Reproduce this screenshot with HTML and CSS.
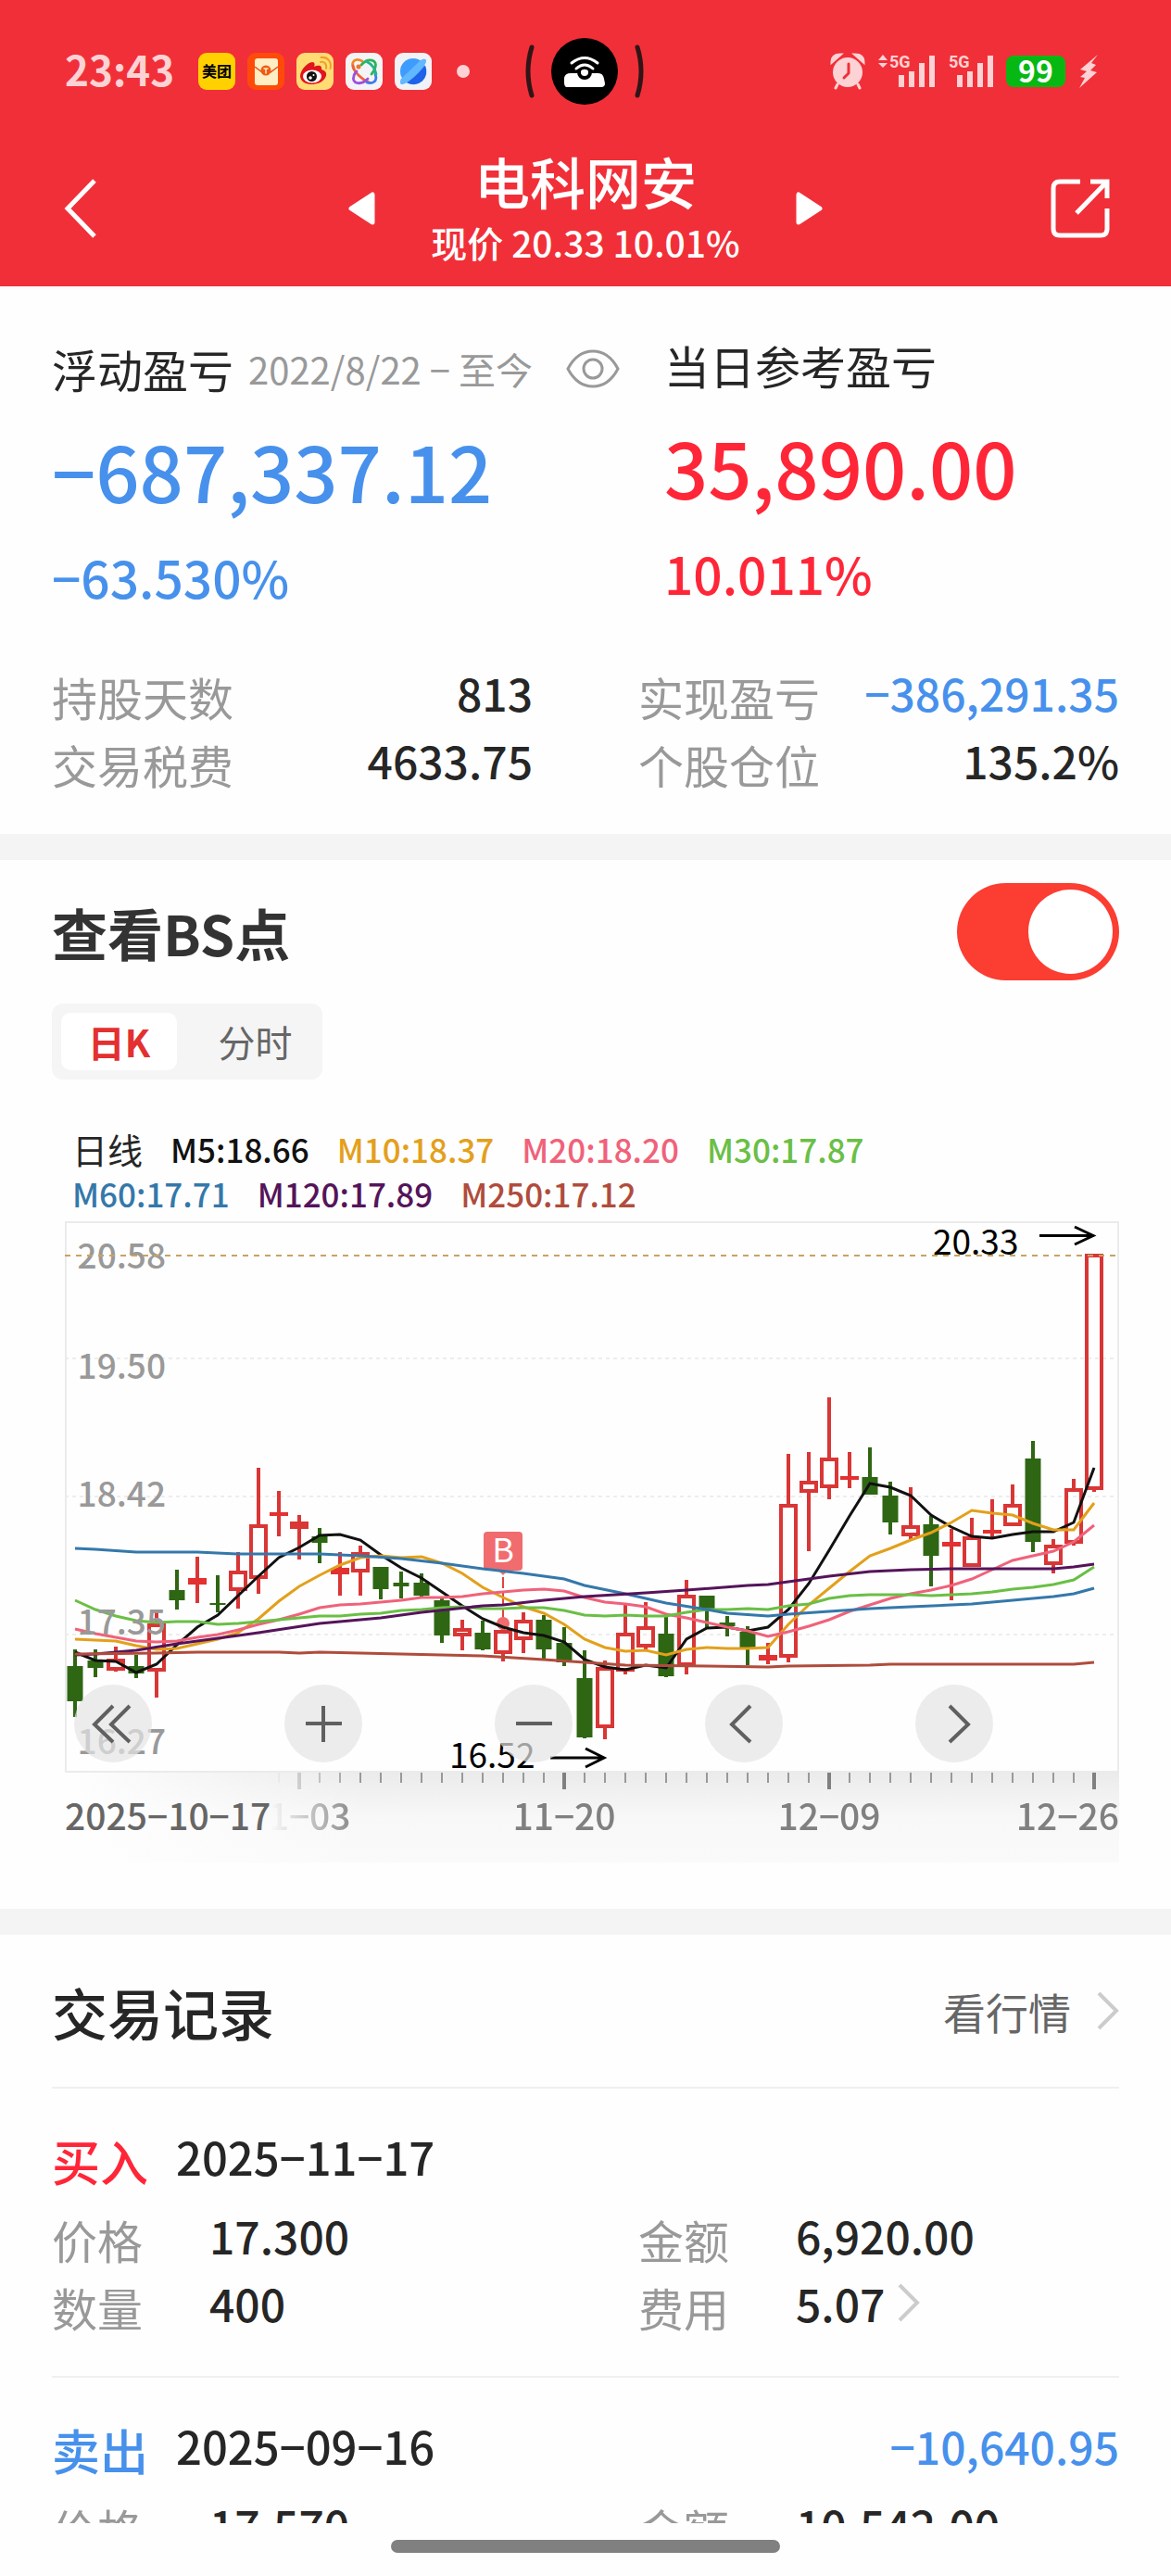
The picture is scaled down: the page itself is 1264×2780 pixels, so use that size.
FILE: index.html
```html
<!DOCTYPE html>
<html lang="zh-CN">
<head>
  <meta charset="UTF-8">
  <meta name="viewport" content="width=device-width, initial-scale=1.0">
  <title>电科网安</title>
  <link rel="stylesheet" href="styles.css">
</head>
<body>
  <header>
    <div class="status-bar">
      <div class="status-left">
        <span class="time">23:43</span>
        <div class="apps">
          <svg viewBox="0 0 40 40"><rect width="40" height="40" rx="9" fill="#ffd100"/><text x="20" y="26" class="meituan">美团</text></svg>
          <svg viewBox="0 0 40 40">
            <rect width="40" height="40" rx="9" fill="#ff4b0a"/>
            <rect x="8" y="6" width="25" height="29" rx="3" fill="#ffedc4"/>
            <path d="M8 15l8 6h9l8-6" fill="none" stroke="#e8500e" stroke-width="1.5"/>
            <circle cx="20" cy="19" r="5.5" fill="#f05a12"/>
            <path d="M17.500 17h5M20 17v5.500" stroke="#ffedc4" stroke-width="1.500"/>
          </svg>
          <svg viewBox="0 0 40 40">
            <rect width="40" height="40" rx="9" fill="#ffdc74"/>
            <path d="M4 25c0-6 8-15 13-15 3 0 3 3 2 5 4-2 9-2 8 3 4 1 7 4 4 9-3 5-9 7-15 7-7 0-12-4-12-9z" fill="#e2141c"/>
            <ellipse cx="17" cy="25.500" rx="10" ry="7" fill="#fff"/>
            <circle cx="16.500" cy="25.500" r="5.500" fill="#111"/>
            <circle cx="15" cy="27" r="1.800" fill="#fff"/><circle cx="18.500" cy="24" r="1" fill="#fff"/>
            <path d="M26 10c4-1 7 2 6 7M26.500 5c7-1 12 5 10 12" fill="none" stroke="#f0a02c" stroke-width="2" stroke-linecap="round"/>
          </svg>
          <svg viewBox="0 0 40 40">
            <rect width="40" height="40" rx="9" fill="#f4f4f6"/>
            <g fill="none" stroke-width="2.800" stroke-linecap="round">
              <path d="M9 17C5 9 11 5 18 9" stroke="#f08a24"/>
              <path d="M17 13c8-9 18-5 15 3-1 3-2 5-4 7" stroke="#2fb457"/>
              <path d="M8 14c0 6 11 16 18 18" stroke="#f0623c"/>
              <path d="M32 23c3 8-3 11-9 9" stroke="#3b7df0"/>
              <path d="M22 9c6 3 10 8 11 14" stroke="#27b48a"/>
              <path d="M24 28c-8 8-18 5-15-3 0-2 2-4 3-5" stroke="#9b50e0"/>
            </g>
            <circle cx="14" cy="15" r="2.500" fill="#f0742c"/>
          </svg>
          <svg viewBox="0 0 40 40">
            <rect width="40" height="40" rx="9" fill="#f1f2f5"/>
            <circle cx="20" cy="20" r="14" fill="#3f9cff"/>
            <path d="M33 14a14 14 0 0 1-20 18z" fill="#1e62ea"/>
            <path d="M6 32c0 4 6 2 14-5S35 11 34 8c-1-2-4-1-6 0L7 28c-1 1-1 3-1 4z" fill="#62b8ff"/>
          </svg>
        </div>
        <span class="more-dot"></span>
      </div>

      <svg class="island" viewBox="0 0 132 74">
        <path d="M9 11q-8 26 0 52M123 11q8 26 0 52" fill="none" stroke="#301518" stroke-width="5" stroke-linecap="round"/>
        <circle cx="66" cy="37" r="36" fill="#000"/>
        <path d="M44 49v-5q1-5 7-5h30q5 0 6 6l1 5q0 4-4 4H47q-3 0-3-5z" fill="#fff"/>
        <circle cx="66" cy="38" r="6" fill="#fff" stroke="#000" stroke-width="4"/>
        <path d="M57 35q9-9 18 0" fill="none" stroke="#000" stroke-width="8"/>
        <path d="M57 34q9-8 18 0M52 28q14-11 28 0" fill="none" stroke="#fff" stroke-width="3" stroke-linecap="round"/>
      </svg>

      <div class="status-right">
        <svg width="38" height="40" viewBox="0 0 38 40">
          <circle cx="19" cy="21" r="16" fill="#fdd2d4"/>
          <path d="M2 10q0-8 9-8zM36 10q0-8-9-8zM8 34l-2 4M30 34l2 4" fill="#fdd2d4" stroke="#fdd2d4" stroke-width="3" stroke-linecap="round"/>
          <path d="M20 12v10l-5 5" fill="none" stroke="#f12f38" stroke-width="3" stroke-linecap="round"/>
        </svg>
        <svg width="62" height="40" viewBox="0 0 62 40">
          <path d="M0 8l5-6 5 6zM0 11l5 5 5-5z" fill="#fdd2d4"/>
          <text x="12" y="16" class="net">5G</text>
          <path d="M25 24v13M36 20v17M47 11v26M58 3v34" stroke="#fdd2d4" stroke-width="6"/>
        </svg>
        <svg width="48" height="40" viewBox="0 0 48 40">
          <text x="0" y="16" class="net">5G</text>
          <path d="M12 24v13M23 20v17M34 11v26M45 3v34" stroke="#fdd2d4" stroke-width="6"/>
        </svg>
        <span class="battery">99</span>
        <svg width="22" height="38" viewBox="0 0 22 38"><path d="M21 1L2 17l7 2-7 6 5 1-6 11 19-17-7-2 6-6-5-2z" fill="#fdd2d4"/></svg>
      </div>
    </div>

    <nav>
      <button type="button" class="icon-btn" aria-label="返回">
        <svg width="64" height="64" viewBox="0 0 64 64"><path d="M36 2L7 32l29 30" fill="none" stroke="#fff" stroke-width="5"/></svg>
      </button>
      <div class="stock">
        <button type="button" class="icon-btn" aria-label="上一只">
          <svg width="30" height="36" viewBox="0 0 30 36"><path d="M26 3v30L3 18z" fill="#fff" stroke="#fff" stroke-width="5" stroke-linejoin="round"/></svg>
        </button>
        <div class="stock-name">
          <h1>电科网安</h1>
          <p>现价 20.33 10.01%</p>
        </div>
        <button type="button" class="icon-btn" aria-label="下一只">
          <svg width="30" height="36" viewBox="0 0 30 36"><path d="M4 3v30l23-15z" fill="#fff" stroke="#fff" stroke-width="5" stroke-linejoin="round"/></svg>
        </button>
      </div>
      <button type="button" class="icon-btn" aria-label="分享">
        <svg width="64" height="64" viewBox="0 0 64 64"><path d="M32 3H10q-7 0-7 7v44q0 7 7 7h44q7 0 7-7V32M43 3h18v18M61 3L28 37" fill="none" stroke="#fff" stroke-width="5"/></svg>
      </button>
    </nav>
  </header>

  <main>
    <section class="summary">
      <div class="pnl">
        <div class="pnl-total">
          <div class="pnl-label">
            <h2>浮动盈亏</h2>
            <span class="range">2022/8/22 − 至今</span>
            <button type="button" class="icon-btn eye" aria-label="隐藏金额">
              <svg width="58" height="42" viewBox="0 0 58 42" fill="none" stroke="#999" stroke-width="3"><path d="M2 21Q12 2 29 2t27 19Q46 40 29 40T2 21z"/><circle cx="29" cy="21" r="10"/></svg>
            </button>
          </div>
          <p class="amount blue">−687,337.12</p>
          <p class="rate blue">−63.530%</p>
        </div>
        <div class="pnl-day">
          <div class="pnl-label"><h2>当日参考盈亏</h2></div>
          <p class="amount red">35,890.00</p>
          <p class="rate red">10.011%</p>
        </div>
      </div>
      <dl class="rows stats">
        <div class="row"><dt>持股天数</dt><dd>813</dd></div>
        <div class="row"><dt>实现盈亏</dt><dd class="blue">−386,291.35</dd></div>
        <div class="row"><dt>交易税费</dt><dd>4633.75</dd></div>
        <div class="row"><dt>个股仓位</dt><dd>135.2%</dd></div>
      </dl>
    </section>

    <section class="bs">
      <div class="bs-head">
        <h2><label for="bs-switch">查看BS点</label></h2>
        <input type="checkbox" id="bs-switch" class="switch" checked>
      </div>
      <div class="tabs">
        <button type="button" class="tab active">日K</button>
        <button type="button" class="tab">分时</button>
      </div>
      <div class="chart-box">
        <div class="legend">
          <span class="legend-title">日线</span>
          <span class="m5">M5:18.66</span>
          <span class="m10">M10:18.37</span>
          <span class="m20">M20:18.20</span>
          <span class="m30">M30:17.87</span>
          <span class="m60">M60:17.71</span>
          <span class="m120">M120:17.89</span>
          <span class="m250">M250:17.12</span>
        </div>
        <div class="chart">
          <svg class="kline" viewBox="0 0 1138 692">
            <defs>
              <linearGradient id="axisBg" x2="0" y2="1"><stop offset="0" stop-color="#ebebeb"/><stop offset=".5" stop-color="#f8f8f8"/><stop offset="1" stop-color="#fafafa"/></linearGradient>
              <linearGradient id="axisFade"><stop offset="0" stop-color="#fefefe"/><stop offset="1" stop-color="#fefefe" stop-opacity="0"/></linearGradient>
              <linearGradient id="labelFade" gradientUnits="userSpaceOnUse" x1="222" x2="320" y1="0" y2="0"><stop offset="0" stop-color="#000"/><stop offset="1" stop-color="#fff"/></linearGradient>
              <mask id="labelMask" maskUnits="userSpaceOnUse" x="0" y="590" width="1138" height="102"><rect y="590" width="1138" height="102" fill="url(#labelFade)"/></mask>
            </defs>
            <path class="grid" d="M0 148H1138M0 297H1138M0 446H1138"/>
            <rect class="frame" x="1" y="1" width="1136" height="593"/>
            <g id="candles"></g>
            <g class="bs-mark">
              <path class="bs-line" d="M473 384V430"/>
              <circle cx="473" cy="434" r="7"/>
              <path d="M467 376h12l-6 6z"/>
              <rect x="452" y="335" width="42" height="42" rx="4"/>
              <text x="473" y="368">B</text>
            </g>
            <g id="lines"></g>
            <g class="y-labels">
              <text x="109" y="51">20.58</text>
              <text x="109" y="170">19.50</text>
              <text x="109" y="308">18.42</text>
              <text x="109" y="446">17.35</text>
              <text x="109" y="575">16.27</text>
            </g>
            <path class="last-price" d="M0 37H1138"/>
            <g class="marks">
              <text x="937" y="36">20.33</text>
              <path d="M1052 15.500h58M1090 6l20 9.500-20 9.500"/>
              <text x="415" y="590">16.52</text>
              <path d="M524 579h58M562 569l20 10-20 10"/>
            </g>
            <rect y="595" width="1138" height="97" fill="url(#axisBg)"/>
            <rect y="595" width="330" height="97" fill="url(#axisFade)"/>
            <g mask="url(#labelMask)">
              <g id="ticks"></g>
              <g class="x-labels">
                <text x="253" y="657">11−03</text>
                <text x="539" y="657">11−20</text>
                <text x="825" y="657">12−09</text>
                <text x="1138" y="657" class="end">12−26</text>
              </g>
            </g>
            <text class="x-start" x="0" y="657">2025−10−17</text>
          </svg>
          <div class="chart-tools">
            <button type="button" aria-label="最早"><svg viewBox="0 0 84 84"><path d="M42 23L22 43l20 19M60 23L40 43l20 19"/></svg></button>
            <button type="button" aria-label="放大"><svg viewBox="0 0 84 84"><path d="M42 23v39M23 42h39"/></svg></button>
            <button type="button" aria-label="缩小"><svg viewBox="0 0 84 84"><path d="M23 42h39"/></svg></button>
            <button type="button" aria-label="向左"><svg viewBox="0 0 84 84"><path d="M49 23L29 43l20 19"/></svg></button>
            <button type="button" aria-label="向右"><svg viewBox="0 0 84 84"><path d="M37 23l20 20-20 19"/></svg></button>
          </div>
        </div>
      </div>
    </section>

    <section class="trades">
      <div class="trades-head">
        <h2>交易记录</h2>
        <a href="#">看行情<svg width="24" height="42" viewBox="0 0 24 42"><path d="M2 2l19 19L2 40"/></svg></a>
      </div>
      <article class="trade">
        <div class="trade-title"><h3 class="red">买入</h3><span class="date">2025−11−17</span></div>
        <dl class="rows">
          <div class="row"><dt>价格</dt><dd>17.300</dd></div>
          <div class="row"><dt>金额</dt><dd>6,920.00</dd></div>
          <div class="row"><dt>数量</dt><dd>400</dd></div>
          <div class="row"><dt>费用</dt><dd>5.07<svg width="24" height="42" viewBox="0 0 24 42"><path d="M2 2l19 19L2 40"/></svg></dd></div>
        </dl>
      </article>
      <article class="trade">
        <div class="trade-title"><h3 class="blue">卖出</h3><span class="date">2025−09−16</span><span class="profit blue">−10,640.95</span></div>
        <dl class="rows">
          <div class="row"><dt>价格</dt><dd>17.570</dd></div>
          <div class="row"><dt>金额</dt><dd>10,542.00</dd></div>
        </dl>
      </article>
    </section>
  </main>

  <footer><div class="home-bar"></div></footer>

  <script>
    const step = 22;
    const first = 11;

    // [最高, 实体上沿, 实体下沿, 最低, 类型] r: 空心阳线 s: 实心阳线 g: 阴线
    const candles = [
      [462,480,518,535,'g'],[462,474,482,492,'g'],[459,472,485,486,'r'],[468,480,488,493,'g'],[422,434,486,514,'r'],
      [376,398,409,419,'g'],[362,385,392,412,'s'],[382,412,414,422,'g'],[357,377,399,418,'r'],[266,327,386,402,'r'],
      [291,314,318,340,'s'],[317,324,332,365,'r'],[331,340,347,369,'g'],[357,374,381,404,'s'],[350,357,379,404,'r'],
      [373,373,397,408,'g'],[378,390,394,407,'g'],[380,390,404,405,'g'],[407,409,447,455,'g'],[430,439,448,463,'r'],
      [431,444,462,463,'g'],[440,441,467,475,'r'],[422,430,452,466,'r'],[425,430,462,474,'g'],[438,455,476,480,'g'],
      [463,493,557,558,'g'],[474,481,547,559,'r'],[414,444,486,489,'r'],[411,437,460,464,'r'],[427,445,491,492,'g'],
      [387,403,480,489,'r'],[404,404,420,439,'g'],[426,433,437,448,'g'],[437,443,462,479,'g'],[455,468,474,478,'s'],
      [251,305,471,476,'r'],[249,280,293,356,'r'],[190,255,288,300,'r'],[249,275,279,288,'s'],[244,276,295,295,'g'],
      [281,296,325,338,'g'],[287,328,340,343,'r'],[318,327,361,394,'g'],[332,346,351,409,'s'],[320,340,373,373,'r'],
      [300,333,337,341,'s'],[284,305,329,329,'r'],[237,256,346,357,'g'],[343,349,371,380,'r'],[278,288,348,350,'r'],
      [35,35,290,292,'r']
    ];

    // 均线: 每项为 [第几根, y]
    const lines = {
      '#111111': [465,474,475,487,478,457,438,425,404,383,363,352,339,338,344,360,374,385,400,415,429,438,444,447,454,473,481,484,479,482,451,439,438,442,438,419,391,355,318,283,287,296,317,330,340,342,338,335,335,325,266].map((y, i) => [i, y]),
      '#e3a01b': [451,452,453,458,462,461,456,451,444,429,410,394,382,371,363,361,363,362,369,380,395,406,416,423,435,451,460,464,463,468,462,460,461,461,460,435,414,396,378,361,353,344,336,325,312,315,317,326,333,333,304].map((y, i) => [i, y]),
      '#f0627a': [440,445,449,453,454,453,449,446,441,435,430,424,417,414,413,411,409,406,406,405,402,400,398,397,399,406,411,413,416,424,428,433,438,442,448,443,437,430,421,414,407,402,398,393,386,376,366,361,356,346,328].map((y, i) => [i, y]),
      '#6abf45': [409,419,426,431,433,432,432,435,434,432,430,428,426,426,424,423,420,419,417,416,418,418,417,417,420,425,426,425,426,426,422,419,419,418,419,415,413,407,404,403,403,403,404,403,402,400,397,395,392,387,373].map((y, i) => [i, y]),
      '#3478aa': [[0,353],[1,354],[3,357],[6,357],[8,359],[12,359],[14,361],[16,364],[18,369],[20,375],[22,380],[24,386],[25,393],[27,402],[29,412],[31,419],[32,423],[34,426],[35,424],[37,421],[39,418],[41,416],[44,413],[46,409],[48,405],[49,402],[50,396]],
      '#55145a': [[0,468],[1,467],[3,463],[5,456],[7,450],[9,444],[12,434],[15,428],[17,422],[20,415],[21,414],[23,409],[25,405],[28,401],[30,398],[33,393],[34,392],[35,389],[37,383],[39,378],[41,376],[43,375],[48,375],[49,373],[50,370]],
      '#b04c3c': [[0,467],[4,466],[6,465],[10,465],[11,466],[12,465],[16,467],[20,469],[23,473],[25,476],[27,479],[31,480],[34,481],[35,480],[39,479],[40,478],[49,478],[50,476]]
    };

    let candleHtml = '';
    let tickHtml = '';
    candles.forEach(function([high, top, bottom, low, type], i) {
      const x = first + step * i;
      candleHtml += `<path class="${type}" d="M${x} ${high}V${top}M${x} ${bottom}V${low}"/>`;
      if (type == 'r') {
        candleHtml += `<rect class="r" x="${x - 8}" y="${top + 2}" width="16" height="${Math.max(bottom - top - 4, 3)}"/>`;
      } else {
        const half = type == 's' ? 10 : 8.5;
        candleHtml += `<rect class="${type} solid" x="${x - half}" y="${top}" width="${half * 2}" height="${bottom - top}"/>`;
      }
      if (i >= 10) {
        // 每13根一个长刻度
        const long = (i - 11) % 13 == 0;
        tickHtml += `<path class="${long ? 'long' : ''}" d="M${x} 595v${long ? 18 : 11}"/>`;
      }
    });
    document.querySelector('#candles').innerHTML = candleHtml;
    document.querySelector('#ticks').innerHTML = tickHtml;

    document.querySelector('#lines').innerHTML = Object.keys(lines).map(function(color) {
      const points = lines[color].map(([i, y]) => `${first + step * i},${y}`).join(' ');
      return `<polyline points="${points}" stroke="${color}"/>`;
    }).join('');

    const tabs = document.querySelectorAll('.tab');
    tabs.forEach(function(tab) {
      tab.addEventListener('click', function() {
        tabs.forEach(t => t.classList.remove('active'));
        tab.classList.add('active');
      });
    });
    document.querySelector('.switch').addEventListener('change', function(e) {
      document.querySelector('.bs-mark').classList.toggle('d-none', !e.target.checked);
    });
  </script>
</body>
</html>
```

FILE: styles.css
```css
*{
  margin: 0;
  padding: 0;
  box-sizing: border-box;
}
body{
  height: 100vh;
  display: flex;
  flex-direction: column;
  background-color: #fefefe;
  color: #262626;
  font-family: 'Noto Sans CJK SC', sans-serif;
  font-size: 48px;
}
button{
  border: none;
  background: none;
  font-family: inherit;
  cursor: pointer;
}
svg{
  display: block;
  flex: none;
}
h1, h2, h3{
  font-weight: 500;
}
.blue{
  color: #4791ec;
}
.red{
  color: #ff2638;
}

/* 顶部 */
header{
  flex: none;
  background-color: #f12f38;
  color: #fff;
}
.status-bar{
  height: 154px;
  padding: 0 72px 0 70px;
  display: grid;
  grid-template-columns: 1fr auto 1fr;
  align-items: center;
}
.status-left, .status-right, .apps{
  display: flex;
  align-items: center;
}
.time{
  width: 144px;
  padding-bottom: 6px;
  font-size: 44px;
  font-weight: 700;
  line-height: 48px;
  color: #fdd2d4;
}
.apps{
  gap: 13px;
}
.apps svg{
  width: 40px;
  height: 40px;
}
.meituan{
  font-size: 16px;
  font-weight: 700;
  text-anchor: middle;
}
.more-dot{
  width: 14px;
  height: 14px;
  margin-left: 27px;
  border-radius: 50%;
  background-color: #fdd2d4;
}
.island{
  width: 132px;
  height: 74px;
}
.status-right{
  padding-right: 6px;
  justify-content: flex-end;
  gap: 14px;
}
.net{
  font-family: Roboto, sans-serif;
  font-size: 18px;
  font-weight: 700;
  fill: #fdd2d4;
}
.battery{
  width: 64px;
  height: 34px;
  border-radius: 8px;
  background-color: #08b812;
  font-size: 32px;
  font-weight: 700;
  line-height: 30px;
  text-align: center;
}
nav{
  height: 155px;
  padding: 0 66px 13px;
  display: flex;
  justify-content: space-between;
  align-items: center;
}
.stock{
  width: 512px;
  display: flex;
  justify-content: space-between;
  align-items: center;
}
.stock-name{
  padding-top: 6px;
  text-align: center;
}
.stock-name h1{
  font-size: 60px;
  line-height: 66px;
}
.stock-name p{
  font-size: 39px;
  font-weight: 500;
  line-height: 66px;
}

main{
  flex: 1;
  min-height: 0;
  overflow: hidden;
}
section{
  padding: 0 56px;
}
section + section{
  border-top: 28px solid #f4f4f4;
}

/* 盈亏 */
.summary{
  padding-top: 50px;
  padding-bottom: 39px;
}
.pnl{
  display: grid;
  grid-template-columns: 35fr 26fr;
}
.pnl-total{
  padding-top: 4px;
}
.pnl-label{
  display: flex;
  align-items: center;
  line-height: 70px;
}
.pnl-label h2{
  font-size: 49px;
  font-weight: 400;
}
.range{
  margin-left: 16px;
  font-size: 40px;
  color: #999;
}
.eye{
  margin-left: auto;
  margin-right: 48px;
}
.amount{
  margin-top: 24px;
  font-size: 83px;
  font-weight: 500;
  line-height: 100px;
}
.rate{
  margin-top: 30px;
  font-size: 55px;
  font-weight: 500;
  line-height: 70px;
}
.rows{
  display: grid;
  grid-template-columns: 1fr 1fr;
  column-gap: 114px;
}
.row{
  height: 73px;
  display: flex;
}
.row dt{
  min-width: 170px;
  font-size: 49px;
  line-height: 73px;
  color: #999;
}
.row dd{
  display: flex;
  align-items: center;
  height: 64px;
  font-weight: 500;
  line-height: 64px;
}
.stats{
  margin-top: 58px;
}
.stats .row{
  justify-content: space-between;
}

/* BS点 */
.bs{
  padding-bottom: 50px;
}
.bs-head{
  height: 130px;
  padding-top: 25px;
  display: flex;
  justify-content: space-between;
  align-items: center;
}
.bs-head h2{
  font-size: 60px;
  font-weight: 700;
  color: #333;
}
.switch{
  appearance: none;
  width: 175px;
  height: 105px;
  padding: 7px;
  border-radius: 53px;
  background-color: #ccc;
  cursor: pointer;
}
.switch::before{
  content: '';
  display: block;
  width: 91px;
  height: 91px;
  border-radius: 50%;
  background-color: #fff;
}
.switch:checked{
  background-color: #fb3d32;
}
.switch:checked::before{
  margin-left: auto;
}
.tabs{
  width: fit-content;
  margin-top: 25px;
  padding: 10px;
  display: flex;
  gap: 22px;
  border-radius: 12px;
  background-color: #f5f5f5;
}
.tab{
  width: 125px;
  height: 62px;
  border-radius: 10px;
  font-size: 40px;
  line-height: 60px;
  color: #666;
}
.tab.active{
  background-color: #fff;
  font-weight: 700;
  color: #e33030;
}
.chart-box{
  margin-top: 51px;
  padding-left: 14px;
}
.legend{
  padding: 0 120px 0 8px;
  margin-bottom: 6px;
  display: flex;
  flex-wrap: wrap;
  column-gap: 30px;
  font-size: 35px;
  font-weight: 500;
  line-height: 48px;
}
.legend-title{
  font-size: 38px;
  font-weight: 400;
}
.m5{ color: #111; }
.m10{ color: #e3a01b; }
.m20{ color: #f0627a; }
.m30{ color: #6abf45; }
.m60{ color: #3478aa; }
.m120{ color: #55145a; }
.m250{ color: #b04c3c; }

.chart{
  position: relative;
}
.kline{
  width: 100%;
  height: auto;
}
.grid{
  stroke: #dcdcdc;
  stroke-width: 1;
  stroke-dasharray: 4 4;
}
.frame{
  fill: none;
  stroke: #ebebeb;
  stroke-width: 2;
}
.last-price{
  stroke: #c8a264;
  stroke-width: 2;
  stroke-dasharray: 6 6;
}
#candles path, #candles rect{
  fill: none;
  stroke-width: 4;
}
#candles .r, #candles .s{
  stroke: #d93636;
}
#candles .g{
  stroke: #2f6613;
}
#candles .solid{
  stroke: none;
}
#candles .solid.s{
  fill: #e33030;
}
#candles .solid.g{
  fill: #2f6613;
}
#lines polyline{
  fill: none;
  stroke-width: 3;
}
.bs-mark{
  fill: #f06c6e;
}
.bs-line{
  stroke: #e04444;
  stroke-width: 2;
  stroke-dasharray: 12 5;
}
.bs-mark text{
  font-size: 36px;
  fill: #fff;
  text-anchor: middle;
}
.y-labels{
  font-size: 37px;
  font-weight: 500;
  fill: #999;
  text-anchor: end;
}
.marks{
  font-size: 37px;
}
.marks path{
  fill: none;
  stroke: #000;
  stroke-width: 3;
}
#ticks path{
  stroke: #999;
  stroke-width: 2;
}
#ticks .long{
  stroke: #808080;
  stroke-width: 4;
}
.x-labels, .x-start{
  font-size: 39px;
  font-weight: 500;
  fill: #808080;
  text-anchor: middle;
}
.x-labels .end{
  text-anchor: end;
}
.x-start{
  fill: #666;
  text-anchor: start;
}
.chart-tools{
  position: absolute;
  top: 500px;
  left: 10px;
  right: 136px;
  display: flex;
  justify-content: space-between;
}
.chart-tools button{
  width: 84px;
  height: 84px;
  border-radius: 50%;
  background-color: rgba(228, 228, 228, .7);
}
.chart-tools path{
  fill: none;
  stroke: #606060;
  stroke-width: 4;
}

/* 交易记录 */
.trades-head{
  height: 166px;
  display: flex;
  justify-content: space-between;
  align-items: center;
  border-bottom: 2px solid #f0f0f0;
}
.trades-head h2{
  font-size: 60px;
}
.trades-head a{
  display: flex;
  align-items: center;
  gap: 28px;
  font-size: 46px;
  color: #666;
  text-decoration: none;
}
.trades-head path, .row path{
  fill: none;
  stroke: #ccc;
  stroke-width: 4;
}
.trade{
  padding: 41px 0 38px;
  border-bottom: 2px solid #f0f0f0;
}
.trade-title{
  height: 73px;
  display: flex;
  font-weight: 500;
  line-height: 64px;
}
.trade-title h3{
  width: 134px;
  font-size: 52px;
  line-height: 73px;
}
.date{
  font-size: 49px;
}
.profit{
  margin-left: auto;
}
.trade .rows{
  margin-top: 12px;
}
.row dd svg{
  margin-left: 14px;
}

/* 底部手势条 */
footer{
  flex: none;
  height: 57px;
  padding-top: 18px;
}
.home-bar{
  width: 420px;
  height: 14px;
  margin: 0 auto;
  border-radius: 7px;
  background-color: #808080;
}
.d-none{
  display: none;
}
```
